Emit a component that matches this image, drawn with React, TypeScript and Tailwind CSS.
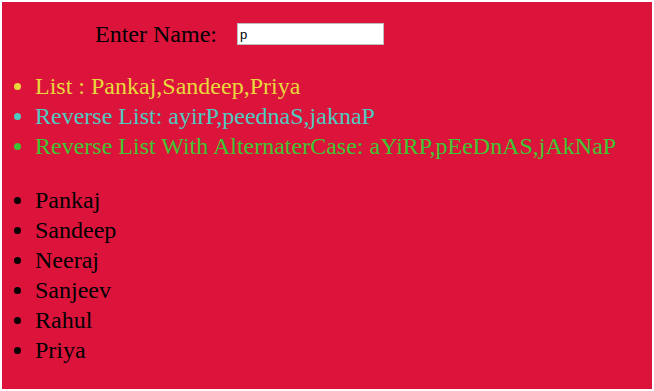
export default function App() {
  const names = ["Pankaj", "Sandeep", "Neeraj", "Sanjeev", "Rahul", "Priya"]

  return (
    <div className="h-[391px] w-[654px] bg-white p-[2px]">
      <div
        className="h-full w-full bg-[#dc143c] text-[24px] text-black"
        style={{ fontFamily: '"Liberation Serif", "Times New Roman", serif' }}
      >
        <div className="flex items-center pl-[93px] pt-[17px] leading-[30px]">
          <span>Enter Name:</span>
          <input
            defaultValue="p"
            className="ml-[20px] h-[22px] w-[147px] border border-[#bdbdbd] bg-white px-[2px] text-[13px] leading-none text-black outline-none"
            style={{ fontFamily: '"Liberation Sans", Arial, sans-serif' }}
          />
        </div>

        <ul className="mt-[22px] list-disc pl-[33px] leading-[30px]">
          <li className="text-[#e8d83c]">List : Pankaj,Sandeep,Priya</li>
          <li className="text-[#4ec9c0]">Reverse List: ayirP,peednaS,jaknaP</li>
          <li className="text-[#3ec433]">Reverse List With AlternaterCase: aYiRP,pEeDnAS,jAkNaP</li>
        </ul>

        <ul className="mt-[24px] list-disc pl-[33px] leading-[30px]">
          {names.map((name) => (
            <li key={name}>{name}</li>
          ))}
        </ul>
      </div>
    </div>
  )
}
